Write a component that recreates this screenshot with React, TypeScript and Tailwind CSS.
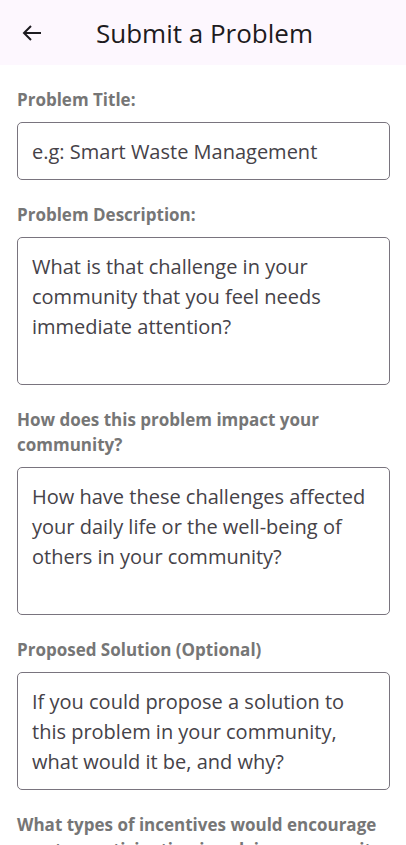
import React from "react";

const font = { fontFamily: '"Open Sans", "Noto Sans", sans-serif' };

function Label({ children }: { children: React.ReactNode }) {
  return (
    <div className="text-[17px] leading-[25px] font-bold text-[#767676] mb-[10px]">
      {children}
    </div>
  );
}

function Box({ text, lines }: { text: string; lines: number }) {
  return (
    <div
      className="border border-[#79747e] rounded-[5px] px-[14px] pt-[14px] pb-[12px] text-[20px] leading-[30px] text-[#454248] mb-[22px]"
      style={{ minHeight: lines * 30 + 28 }}
    >
      {text}
    </div>
  );
}

export default function App() {
  return (
    <div className="w-[406px] h-[845px] overflow-hidden bg-white" style={font}>
      <div className="h-[65px] bg-[#fdf7fe] flex items-center">
        <div className="w-[64px] flex items-center pl-[20px]">
          <svg width="24" height="24" viewBox="0 0 24 24" fill="none" stroke="#1d1b20" strokeWidth="2" strokeLinecap="square">
            <path d="M20 12H5" />
            <path d="M11 5l-7 7 7 7" strokeLinecap="butt" />
          </svg>
        </div>
        <div className="ml-[32px] text-[26px] leading-[32px] text-[#1d1b20]">Submit a Problem</div>
      </div>
      <div className="pl-[17px] pr-[16px] pt-[22px]">
        <Label>Problem Title:</Label>
        <Box text="e.g: Smart Waste Management" lines={1} />
        <Label>Problem Description:</Label>
        <Box text="What is that challenge in your community that you feel needs immediate attention?" lines={4} />
        <Label>How does this problem impact your community?</Label>
        <Box text="How have these challenges affected your daily life or the well-being of others in your community?" lines={4} />
        <Label>Proposed Solution (Optional)</Label>
        <Box text="If you could propose a solution to this problem in your community, what would it be, and why?" lines={3} />
        <Label>What types of incentives would encourage greater participation in solving community problems?</Label>
      </div>
    </div>
  );
}
